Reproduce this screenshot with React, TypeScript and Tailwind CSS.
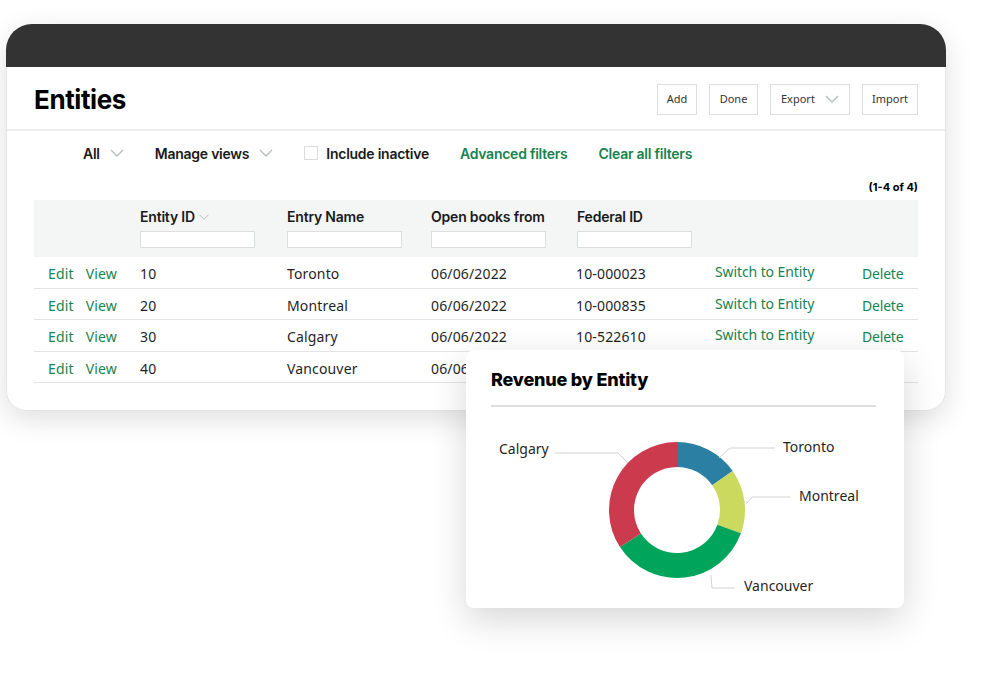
import React from "react";

const rows = [
  { id: "10", name: "Toronto", date: "06/06/2022", fed: "10-000023" },
  { id: "20", name: "Montreal", date: "06/06/2022", fed: "10-000835" },
  { id: "30", name: "Calgary", date: "06/06/2022", fed: "10-522610" },
  { id: "40", name: "Vancouver", date: "06/06/2022", fed: "10-000412" },
];

const slices = [
  { name: "Toronto", from: 0, to: 55, color: "#2a7fa3" },
  { name: "Montreal", from: 55, to: 110, color: "#cbd95f" },
  { name: "Vancouver", from: 110, to: 237, color: "#00a45a" },
  { name: "Calgary", from: 237, to: 360, color: "#cc3a4d" },
];

function Chevron({ className = "" }: { className?: string }) {
  return (
    <svg width="14" height="8" viewBox="0 0 14 8" className={className}>
      <polyline points="1,1 7,7 13,1" fill="none" stroke="#b8bcc0" strokeWidth="1.3" />
    </svg>
  );
}

function arc(cx: number, cy: number, ro: number, ri: number, a0: number, a1: number) {
  const p = (r: number, a: number) => {
    const t = ((a - 90) * Math.PI) / 180;
    return `${(cx + r * Math.cos(t)).toFixed(2)} ${(cy + r * Math.sin(t)).toFixed(2)}`;
  };
  const large = a1 - a0 > 180 ? 1 : 0;
  return `M ${p(ro, a0)} A ${ro} ${ro} 0 ${large} 1 ${p(ro, a1)} L ${p(ri, a1)} A ${ri} ${ri} 0 ${large} 0 ${p(ri, a0)} Z`;
}

function Donut() {
  const cx = 211;
  const cy = 101;
  return (
    <svg width="438" height="200" viewBox="0 0 438 200" className="block">
      {slices.map((s) => (
        <path key={s.name} d={arc(cx, cy, 68, 43, s.from, s.to)} fill={s.color} />
      ))}
      <g fill="none" stroke="#cfd2d4" strokeWidth="1">
        <polyline points="89,44 152,44 162,54" />
        <polyline points="309,39 264,39 253,49" />
        <polyline points="324,88 286,88 280,95" />
        <polyline points="269,179 246,179 245,166" />
      </g>
      <g fill="#1f1f1f" fontSize="14" fontFamily="'Noto Sans', sans-serif">
        <text x="33" y="45">Calgary</text>
        <text x="317" y="43">Toronto</text>
        <text x="333" y="92">Montreal</text>
        <text x="278" y="182">Vancouver</text>
      </g>
    </svg>
  );
}

export default function App() {
  return (
    <div className="relative w-[1001px] h-[700px] bg-white overflow-hidden font-['Inter',sans-serif] text-[#1a1a1a]">
      <div className="ml-[6px] mt-[24px] w-[940px] rounded-t-[26px] rounded-b-[20px] bg-white shadow-[0_8px_28px_rgba(0,0,0,0.13)]">
        <div className="h-[43px] rounded-t-[26px] bg-[#333333]" />
        <div className="border-x border-b border-[#e3e5e6] rounded-b-[20px] pb-[27px]">
          <div className="flex h-[64px] items-center justify-between border-b-2 border-[#eceeef] px-[27px] pt-[2px]">
            <h1 className="text-[26px] font-bold tracking-[-0.4px] text-black">Entities</h1>
            <div className="flex items-center gap-3 font-['Noto_Sans',sans-serif] text-[11px] text-[#333]">
              <button className="h-[31px] w-[40px] border border-[#dcdfe1]">Add</button>
              <button className="h-[31px] w-[49px] border border-[#dcdfe1]">Done</button>
              <button className="flex h-[31px] w-[80px] items-center justify-between border border-[#dcdfe1] pl-[10px] pr-[10px]">
                Export
                <Chevron />
              </button>
              <button className="h-[31px] w-[56px] border border-[#dcdfe1]">Import</button>
            </div>
          </div>

          <div className="flex h-[43px] items-center gap-[31px] pl-[76px] pt-[1px] text-[14px] font-semibold tracking-[-0.25px]">
            <div className="flex items-center gap-[10px]">
              <span>All</span>
              <Chevron />
            </div>
            <div className="flex items-center gap-[10px]">
              <span>Manage views</span>
              <Chevron />
            </div>
            <label className="flex items-center gap-2">
              <span className="h-[14px] w-[14px] border border-[#dadcde] bg-white" />
              <span>Include inactive</span>
            </label>
            <span className="text-[#17834f]">Advanced filters</span>
            <span className="text-[#17834f]">Clear all filters</span>
          </div>

          <div className="flex h-[26px] items-center justify-end px-[27px] text-[11px] font-bold text-black">
            (1-4 of 4)
          </div>

          <div className="mx-[27px]">
            <div className="grid h-[57px] grid-cols-[106px_147px_144px_146px_138px_147px_1fr] bg-[#f4f5f5] text-[14px] font-semibold tracking-[-0.2px]">
              <div />
              {["Entity ID", "Entry Name", "Open books from", "Federal ID"].map((h, i) => (
                <div key={h} className="flex flex-col pt-[8px]">
                  <div className="flex h-[17px] items-center gap-[2px]">
                    <span>{h}</span>
                    {i === 0 && <Chevron className="scale-75" />}
                  </div>
                  <div className="mt-[6px] h-[17px] w-[115px] border border-[#dcdfe1] bg-white" />
                </div>
              ))}
              <div />
              <div />
            </div>
            {rows.map((r) => (
              <div
                key={r.id}
                className="grid h-[31.5px] grid-cols-[106px_147px_144px_146px_138px_147px_1fr] items-center border-b border-[#e2e4e5] pt-[3px] font-['Noto_Sans',sans-serif] text-[14px] tracking-[0.15px] text-[#1f1f1f]"
              >
                <div className="flex gap-[12px] pl-[14px] text-[#17834f]">
                  <span>Edit</span>
                  <span>View</span>
                </div>
                <span>{r.id}</span>
                <span>{r.name}</span>
                <span>{r.date}</span>
                <span className="-ml-[1px]">{r.fed}</span>
                <span className="-mt-[4px] tracking-[-0.1px] text-[#17834f]">Switch to&nbsp;Entity</span>
                <span className="tracking-[-0.2px] text-[#17834f]">Delete</span>
              </div>
            ))}
          </div>
        </div>
      </div>

      <div className="absolute left-[466px] top-[350px] h-[258px] w-[438px] rounded-[8px] bg-white shadow-[0_12px_36px_rgba(0,0,0,0.16)]">
        <div className="px-[25px] pt-[16px]">
          <h2 className="text-[18px] font-extrabold tracking-[-0.2px] text-black">Revenue by Entity</h2>
          <div className="mt-[12px] mr-[4px] h-[2px] w-[385px] bg-[#dcdedf]" />
        </div>
        <div className="mt-[2px]">
          <Donut />
        </div>
      </div>
    </div>
  );
}
